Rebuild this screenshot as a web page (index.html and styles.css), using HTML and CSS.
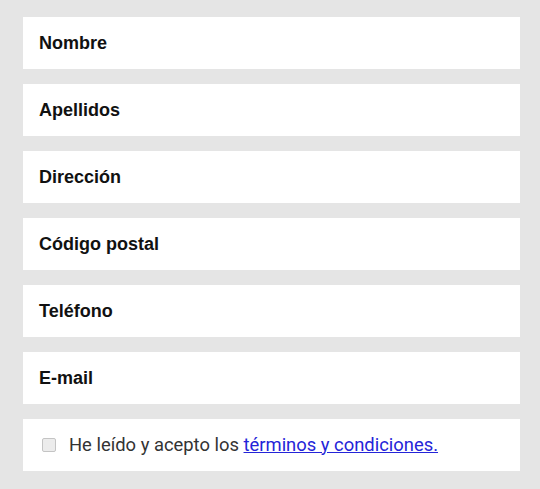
FILE: index.html
```html
<!DOCTYPE html>
<html lang="es">
<head>
<meta charset="utf-8">
<link rel="stylesheet" href="styles.css">
</head>
<body>
<form class="form">
  <div class="field">Nombre</div>
  <div class="field">Apellidos</div>
  <div class="field">Dirección</div>
  <div class="field">Código postal</div>
  <div class="field">Teléfono</div>
  <div class="field">E-mail</div>
  <label class="terms">
    <span class="check"></span>
    <span class="terms-text">He leído y acepto los <a href="#" class="link">términos y condiciones.</a></span>
  </label>
</form>
</body>
</html>
```
FILE: styles.css
```css
html, body {
  margin: 0;
  padding: 0;
  background: #e5e5e5;
}
body {
  width: 540px;
  height: 489px;
  overflow: hidden;
}
.form {
  display: flex;
  flex-direction: column;
  gap: 15px;
  padding: 17px 20px 0 23px;
}
.field {
  height: 52px;
  background: #ffffff;
  display: flex;
  align-items: center;
  padding-left: 16px;
  font-family: "Liberation Sans", Arial, sans-serif;
  font-weight: bold;
  font-size: 18px;
  color: #111;
  box-sizing: border-box;
}
.terms {
  height: 52px;
  background: #ffffff;
  display: flex;
  align-items: center;
  padding-left: 19px;
  box-sizing: border-box;
  font-family: Roboto, "Liberation Sans", sans-serif;
  font-size: 18.4px;
  color: #333;
}
.terms-text {
  margin-top: -2px;
}
.check {
  width: 12px;
  height: 12px;
  border: 1px solid #c4c4c4;
  border-radius: 2px;
  background: #ececec;
  margin-right: 13px;
  flex: none;
}
.link {
  color: #2424d8;
  text-decoration: underline;
}
```
